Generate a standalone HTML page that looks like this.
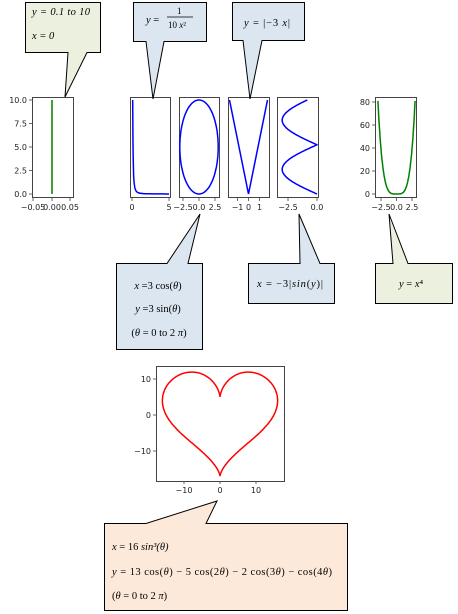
<!DOCTYPE html>
<html><head><meta charset="utf-8"><style>
html,body{margin:0;padding:0;background:#fff;width:458px;height:614px;overflow:hidden}
svg{display:block}
.t{font-family:"DejaVu Sans","Liberation Sans",sans-serif;font-size:8px;fill:#222}
.m{font-family:"Liberation Serif",serif;font-size:10.5px;fill:#000}
.i{font-style:italic}
</style></head><body>
<svg id="s" width="458" height="614" viewBox="0 0 458 614" xmlns="http://www.w3.org/2000/svg">
<g fill="none" stroke="#444" stroke-width="1">
<rect x="32.5" y="97.5" width="41" height="100"/>
<rect x="130.5" y="97.5" width="40" height="100"/>
<rect x="179.5" y="97.5" width="40" height="100"/>
<rect x="228.5" y="97.5" width="41" height="100"/>
<rect x="277.5" y="97.5" width="41" height="100"/>
<rect x="375.5" y="97.5" width="41" height="100"/>
<rect x="156.5" y="366.5" width="128" height="115"/>
</g>
<g id="curves" fill="none" stroke-width="1.5"></g>
<g id="ticks" stroke="#444" stroke-width="0.8"></g>
<g id="labels"></g>

<g stroke="#000" stroke-width="1">
<path d="M25.5,2.5H100.5V52.5H87L65,97L68,52.5H25.5Z" fill="#ebf1de"/>
<path d="M133.5,2.5H206.5V41.5H164L153,99L146,41.5H133.5Z" fill="#dce6f1"/>
<path d="M232.5,2.5H304.5V40.5H262L250,99L243,40.5H232.5Z" fill="#dce6f1"/>
<path d="M116.5,263.5H167L200,214L188,263.5H202.5V349.5H116.5Z" fill="#dce6f1"/>
<path d="M248.5,263.5H300L299,214L320,263.5H334.5V303.5H248.5Z" fill="#dce6f1"/>
<path d="M375.5,263.5H393L389,214L408,263.5H452.5V303.5H375.5Z" fill="#ebf1de"/>
<path d="M104.5,523.5H146L217,501L206,523.5H347.5V610.5H104.5Z" fill="#fde9d9"/>
</g>
<g class="m">
<text x="32" y="15" class="i" textLength="58">y = 0.1 to 10</text>
<text x="32" y="39" class="i">x = 0</text>
<text x="146" y="23"><tspan class="i">y</tspan> =</text>
<text x="177" y="14" font-size="9">1</text>
<line x1="167" y1="17" x2="193" y2="17" stroke="#000" stroke-width="0.7"/>
<text x="168" y="28" font-size="9">10 <tspan class="i">x</tspan>²</text>
<text x="244" y="26" textLength="46"><tspan class="i">y</tspan> = |−3 <tspan class="i">x</tspan>|</text>
<text x="158" y="289" text-anchor="middle"><tspan class="i">x</tspan> =3 cos(<tspan class="i">θ</tspan>)</text>
<text x="158" y="312" text-anchor="middle"><tspan class="i">y</tspan> =3 sin(<tspan class="i">θ</tspan>)</text>
<text x="159" y="336" text-anchor="middle">(<tspan class="i">θ</tspan> = 0 to 2 <tspan class="i">π</tspan>)</text>
<text x="257" y="287" textLength="66"><tspan class="i">x</tspan> = −3|<tspan class="i">sin</tspan>(<tspan class="i">y</tspan>)|</text>
<text x="399" y="287"><tspan class="i">y</tspan> = <tspan class="i">x</tspan>⁴</text>
<text x="112" y="550"><tspan class="i">x</tspan> = 16 <tspan class="i">sin³(θ)</tspan></text>
<text x="112" y="575" textLength="220"><tspan class="i">y</tspan> = 13 cos(<tspan class="i">θ</tspan>) − 5 cos(2<tspan class="i">θ</tspan>) − 2 cos(3<tspan class="i">θ</tspan>) − cos(4<tspan class="i">θ</tspan>)</text>
<text x="112" y="599">(<tspan class="i">θ</tspan> = 0 to 2 <tspan class="i">π</tspan>)</text>
</g>
</svg>
<script>
var NS="http://www.w3.org/2000/svg";
function el(p,n,a,txt){var e=document.createElementNS(NS,n);for(var k in a)e.setAttribute(k,a[k]);if(txt!=null)e.textContent=txt;document.getElementById(p).appendChild(e);}
function curve(pts,c){el("curves","polyline",{points:pts.map(function(p){return p[0].toFixed(1)+","+p[1].toFixed(1)}).join(" "),stroke:c});}
var P=[],i,t;
curve([[52,100],[52,194]],"#008000");
for(i=0;i<=200;i++){var x=0.1+i*(4.9/200);var y=1/(10*x*x);P.push([132+7.4*x,194-9.4*y]);}curve(P,"#0000ff");
P=[];for(i=0;i<=200;i++){t=i/200*2*Math.PI;P.push([199+19.2*Math.cos(t),147-47*Math.sin(t)]);}curve(P,"#0000ff");
curve([[229.5,100],[248.5,194],[267.5,100]],"#0000ff");
P=[];for(i=0;i<=300;i++){var yy=i/300*6;P.push([317+11.6*(-3*Math.abs(Math.sin(yy))),194-yy*94/6]);}curve(P,"#0000ff");
P=[];for(i=0;i<=200;i++){var x=-3+6*i/200;P.push([396.5+6.2*x,194-1.15*Math.pow(x,4)]);}curve(P,"#008000");
P=[];for(i=0;i<=400;i++){t=i/400*2*Math.PI;var hx=16*Math.pow(Math.sin(t),3),hy=13*Math.cos(t)-5*Math.cos(2*t)-2*Math.cos(3*t)-Math.cos(4*t);P.push([220+3.6*hx,415-3.6*hy]);}curve(P,"#ff0000");
function yt(x,y,l){el("ticks","line",{x1:x,y1:y,x2:x-3,y2:y});el("labels","text",{x:x-5,y:y+3,"text-anchor":"end","class":"t"},l);}
function xt(x,y,l){el("ticks","line",{x1:x,y1:y,x2:x,y2:y+3});el("labels","text",{x:x,y:y+12,"text-anchor":"middle","class":"t"},l);}
[[100,"10.0"],[123.5,"7.5"],[147,"5.0"],[170.5,"2.5"],[194,"0.0"]].forEach(function(a){yt(32,a[0],a[1]);});
[[33,"−0.05"],[52,"0.00"],[70,"0.05"]].forEach(function(a){xt(a[0],198,a[1]);});
xt(132,198,"0");xt(169,198,"5");
xt(183,198,"−2.5");xt(199,198,"0.0");xt(215,198,"2.5");
xt(237.5,198,"−1");xt(248.5,198,"0");xt(259.5,198,"1");
xt(288,198,"−2.5");xt(317,198,"0.0");
xt(381,198,"−2.5");xt(396.5,198,"0.0");xt(412,198,"2.5");
[[102,"80"],[125,"60"],[148,"40"],[171,"20"],[194,"0"]].forEach(function(a){yt(375,a[0],a[1]);});
xt(184,481,"−10");xt(220,481,"0");xt(256,481,"10");
yt(156,379,"10");yt(156,415,"0");yt(156,451,"−10");
</script>
</body></html>
